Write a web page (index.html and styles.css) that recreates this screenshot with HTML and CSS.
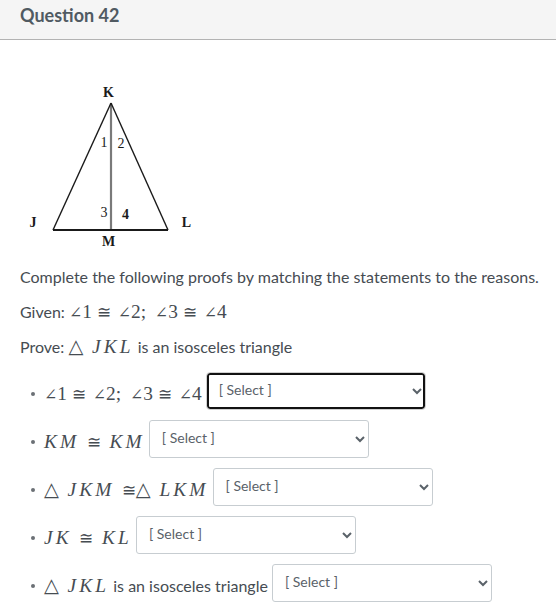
FILE: index.html
```html
<!DOCTYPE html>
<html lang="en">
<head>
<meta charset="utf-8">
<title>Question 42</title>
<link rel="stylesheet" href="styles.css">
</head>
<body>
<div class="question">
  <div class="q-header">
    <span class="q-title">Question 42</span>
  </div>
  <div class="q-body">
    <svg class="figure" viewBox="20 78 180 172" width="180" height="172" xmlns="http://www.w3.org/2000/svg">
      <line x1="111" y1="103" x2="111" y2="230" stroke="#7a7a7a" stroke-width="2.2"/>
      <line x1="111" y1="103" x2="53" y2="230" stroke="#1a1a1a" stroke-width="1.4"/>
      <line x1="111" y1="103" x2="168" y2="230" stroke="#1a1a1a" stroke-width="1.4"/>
      <line x1="53" y1="230" x2="168" y2="230" stroke="#1a1a1a" stroke-width="1.8"/>
      <g class="fig-label">
        <text x="108.5" y="97" text-anchor="middle" font-weight="bold">K</text>
        <text x="33" y="227" text-anchor="middle" font-weight="bold">J</text>
        <text x="186.5" y="227" text-anchor="middle" font-weight="bold">L</text>
        <text x="108.5" y="246" text-anchor="middle" font-weight="bold">M</text>
        <text x="104" y="147" text-anchor="middle">1</text>
        <text x="121" y="148" text-anchor="middle">2</text>
        <text x="104" y="217" text-anchor="middle">3</text>
        <text x="125.5" y="219" text-anchor="middle" font-weight="bold">4</text>
      </g>
    </svg>

    <p class="line">Complete the following proofs by matching the statements to the reasons.</p>
    <p class="line">Given: <span class="math"><span class="ang">∠</span>1<span class="rel">≅</span><span class="ang">∠</span>2;<span class="sp"></span><span class="ang">∠</span>3<span class="rel">≅</span><span class="ang">∠</span>4</span></p>
    <p class="line">Prove: <span class="math">△<span class="sp2"></span><span class="mi">JKL</span></span> is an isosceles triangle</p>

    <ul class="proof">
      <li class="row">
        <span class="dot"></span>
        <span class="stmt"><span class="math"><span class="ang">∠</span>1<span class="rel">≅</span><span class="ang">∠</span>2;<span class="sp"></span><span class="ang">∠</span>3<span class="rel">≅</span><span class="ang">∠</span>4</span></span>
        <select class="reason focused"><option>[ Select ]</option></select>
      </li>
      <li class="row">
        <span class="dot"></span>
        <span class="stmt"><span class="math"><span class="mi">KM</span><span class="rel rel-wide">≅</span><span class="mi">KM</span></span></span>
        <select class="reason"><option>[ Select ]</option></select>
      </li>
      <li class="row">
        <span class="dot"></span>
        <span class="stmt"><span class="math">△<span class="sp2"></span><span class="mi">JKM</span><span class="rel rel-wide rel-left">≅</span>△<span class="sp2"></span><span class="mi">LKM</span></span></span>
        <select class="reason"><option>[ Select ]</option></select>
      </li>
      <li class="row">
        <span class="dot"></span>
        <span class="stmt"><span class="math"><span class="mi">JK</span><span class="rel rel-wide">≅</span><span class="mi">KL</span></span></span>
        <select class="reason"><option>[ Select ]</option></select>
      </li>
      <li class="row">
        <span class="dot"></span>
        <span class="stmt"><span class="math">△<span class="sp2"></span><span class="mi">JKL</span></span> is an isosceles triangle</span>
        <select class="reason"><option>[ Select ]</option></select>
      </li>
    </ul>
  </div>
</div>
</body>
</html>
```

FILE: styles.css
```css
html, body {
  margin: 0;
  padding: 0;
  background: #ffffff;
}

body {
  font-family: Lato, "Open Sans", sans-serif;
  color: #464c52;
  font-size: 16px;
}

.q-header {
  box-sizing: border-box;
  height: 40px;
  padding: 4px 20px 0;
  background: #f5f5f5;
  border-bottom: 1px solid #b3b3b3;
}

.q-title {
  font-weight: 700;
  font-size: 18px;
  color: #505a62;
}

.q-body {
  padding: 0 8px 0 20px;
}

.figure {
  display: block;
  margin-top: 38px;
}

.fig-label text {
  font-family: "Liberation Serif", "DejaVu Serif", serif;
  font-size: 14px;
  fill: #1a1a1a;
}

.line {
  margin: 11px 0 0;
  line-height: 24px;
  white-space: nowrap;
}

.line:first-of-type {
  margin-top: 15px;
}

.math {
  font-family: "Liberation Serif", "DejaVu Serif", serif;
  font-size: 19.36px;
  line-height: 1;
  white-space: nowrap;
}

.mi {
  font-style: italic;
  letter-spacing: 0.16em;
}

.ang {
  font-family: "DejaVu Serif", serif;
  font-size: 0.82em;
  font-weight: 200;
}

.rel {
  font-family: "DejaVu Serif", serif;
  font-size: 0.9em;
  margin: 0 0.38em 0 0.3em;
}

.rel-wide {
  margin: 0 0.52em 0 0.42em;
}

.rel-left {
  margin-right: 0;
}

.sp {
  display: inline-block;
  width: 0.45em;
}

.sp2 {
  display: inline-block;
  width: 0.45em;
}

.proof {
  list-style: none;
  margin: 13px 0 0;
  padding: 0;
}

.row {
  display: flex;
  align-items: center;
  height: 38px;
  margin-bottom: 10px;
}

.dot {
  width: 4px;
  height: 4px;
  border-radius: 50%;
  background: #6b7075;
  margin: 6px 9px 0 11px;
}

.stmt {
  padding-top: 5px;
  white-space: nowrap;
}

.reason {
  box-sizing: border-box;
  width: 220px;
  height: 38px;
  margin-left: 4px;
  padding: 0 8px 4px 8px;
  font-family: Lato, "Open Sans", sans-serif;
  font-size: 14px;
  color: #5a6269;
  background: #ffffff;
  border: 1px solid #c7cdd1;
  border-radius: 3px;
}

.focused {
  box-shadow: inset 0 0 0 2px #121212;
  border-color: #d0d0d0;
  border-radius: 4px;
}
```
